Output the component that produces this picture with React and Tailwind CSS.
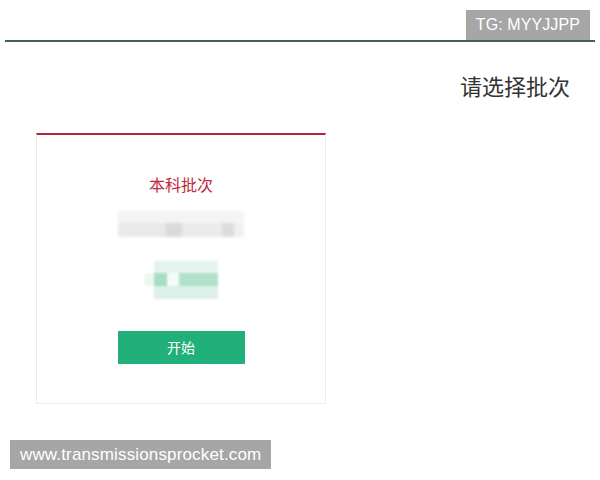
export default function App() {
  return (
    <div className="relative w-[600px] h-[480px] bg-white overflow-hidden" style={{ fontFamily: '"Liberation Sans", "Noto Sans CJK SC", sans-serif' }}>
      {/* header */}
      <div className="pt-[10px] px-[5px]">
        <div className="flex justify-end pr-[5px]">
          <div className="h-[30px] px-[10px] flex items-center bg-[#a6a6a6] text-white text-[16px] tracking-[0.1px]">
            TG: MYYJJPP
          </div>
        </div>
        <div className="h-[2px] bg-[#3e6656]" />
      </div>

      <div className="flex justify-end pr-[30px] pt-[28px]">
        <h1 className="text-[22px] leading-[30px] text-[#333]" style={{ fontFamily: '"Noto Sans CJK SC", sans-serif' }}>请选择批次</h1>
      </div>

      {/* card */}
      <div className="ml-[36px] mt-[33px] w-[290px] h-[271px] border border-[#ececec] border-t-2 border-t-[#b4253a] flex flex-col items-center">
        <p className="mt-[38px] text-[16px] leading-[22px] text-[#c0283c]" style={{ fontFamily: '"Noto Sans CJK SC", sans-serif' }}>本科批次</p>

        {/* blurred bar */}
        <div className="mt-[16px] w-[126px] h-[28px] flex flex-col blur-[1.5px]">
          <div className="h-[12px] flex">
            <div className="flex-1 bg-[#f4f4f4]" />
          </div>
          <div className="h-[14px] flex">
            <div className="w-[48px] bg-[#e9e9e9]" />
            <div className="w-[16px] bg-[#dadada]" />
            <div className="w-[40px] bg-[#ebebeb]" />
            <div className="w-[12px] bg-[#dcdcdc]" />
            <div className="flex-1 bg-[#f0f0f0]" />
          </div>
        </div>

        {/* blurred green */}
        <div className="mt-[22px] w-[74px] h-[38px] flex flex-col blur-[1px]">
          <div className="h-[12px] bg-[#e4f4ed] ml-[10px]" />
          <div className="h-[13px] flex">
            <div className="w-[10px] bg-[#eef8f3]" />
            <div className="w-[13px] bg-[#a9dcc5]" />
            <div className="w-[12px] bg-[#f4fbf8]" />
            <div className="flex-1 bg-[#b2e1cb]" />
          </div>
          <div className="h-[13px] bg-[#dcf1e7] ml-[10px]" />
        </div>

        <button className="mt-[32px] w-[127px] h-[33px] bg-[#21b07a] text-white text-[14px]" style={{ fontFamily: '"Noto Sans CJK SC", sans-serif' }}>
          开始
        </button>
      </div>

      {/* watermark */}
      <div className="absolute left-[10px] top-[440px] h-[29px] px-[10px] flex items-center bg-[#a6a6a6] text-white text-[17px] tracking-[0.15px]">
        www.transmissionsprocket.com
      </div>
    </div>
  )
}
